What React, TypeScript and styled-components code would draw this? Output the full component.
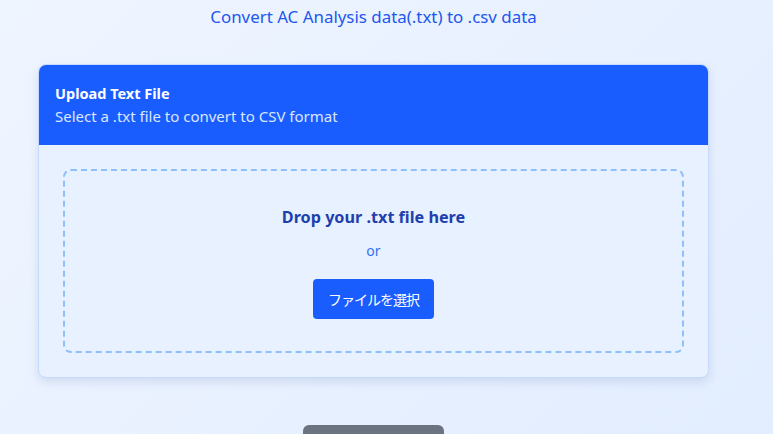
import React from "react";
import styled, { createGlobalStyle } from "styled-components";

const GlobalStyle = createGlobalStyle`
  html, body {
    margin: 0;
    padding: 0;
  }
  body {
    font-family: "Noto Sans", "Noto Sans CJK JP", sans-serif;
    background: linear-gradient(135deg, #eff5ff 0%, #e2edff 100%);
    min-height: 100vh;
    overflow: hidden;
  }
`;

const Page = styled.main`
  display: flex;
  flex-direction: column;
  align-items: center;
  padding: 6px 29px 0 3px;
`;

const PageTitle = styled.h1`
  margin: 0 0 36px;
  font-size: 16.9px;
  font-weight: 400;
  line-height: 22px;
  color: #2157f0;
`;

const Card = styled.section`
  width: 671px;
  box-sizing: border-box;
  border: 1px solid #c5dafc;
  border-radius: 8px;
  overflow: hidden;
  background: #e8f1ff;
  box-shadow: 0 4px 10px rgba(60, 90, 150, 0.15);
`;

const CardHeader = styled.header`
  background: #1a5dff;
  padding: 17px 16px 18px;
  color: #ffffff;

  & > h2 {
    margin: 0;
    font-size: 14.5px;
    font-weight: 700;
    line-height: 22px;
  }

  & > p {
    margin: 1px 0 0;
    font-size: 15px;
    line-height: 22px;
    color: #dbe7ff;
  }
`;

const CardBody = styled.div`
  padding: 24px;
`;

const DropZone = styled.div`
  display: flex;
  flex-direction: column;
  align-items: center;
  padding: 34px 32px 32px;
  border: 2px dashed #8fc0fb;
  border-radius: 8px;

  & > h3 {
    margin: 0 0 12px;
    font-size: 16.2px;
    font-weight: 700;
    line-height: 24px;
    color: #1e3fae;
  }

  & > p {
    margin: 0 0 18px;
    font-size: 14px;
    line-height: 20px;
    color: #3570f0;
  }
`;

const SelectButton = styled.button`
  height: 40px;
  padding: 0 15px;
  border: none;
  border-radius: 4px;
  background: #1a5dff;
  color: #ffffff;
  font-family: "Noto Sans CJK JP", sans-serif;
  font-size: 14px;
  letter-spacing: -1px;
  cursor: pointer;
`;

const ConvertButton = styled.button`
  margin-top: 47px;
  width: 141px;
  height: 40px;
  border: none;
  border-radius: 6px;
  background: #6b7280;
  color: #ffffff;
`;

const App: React.FC = () => {
  return (
    <>
      <GlobalStyle />
      <Page>
        <PageTitle>Convert AC Analysis data(.txt) to .csv data</PageTitle>
        <Card>
          <CardHeader>
            <h2>Upload Text File</h2>
            <p>Select a .txt file to convert to CSV format</p>
          </CardHeader>
          <CardBody>
            <DropZone>
              <h3>Drop your .txt file here</h3>
              <p>or</p>
              <SelectButton>ファイルを選択</SelectButton>
            </DropZone>
          </CardBody>
        </Card>
        <ConvertButton />
      </Page>
    </>
  );
};

export default App;
